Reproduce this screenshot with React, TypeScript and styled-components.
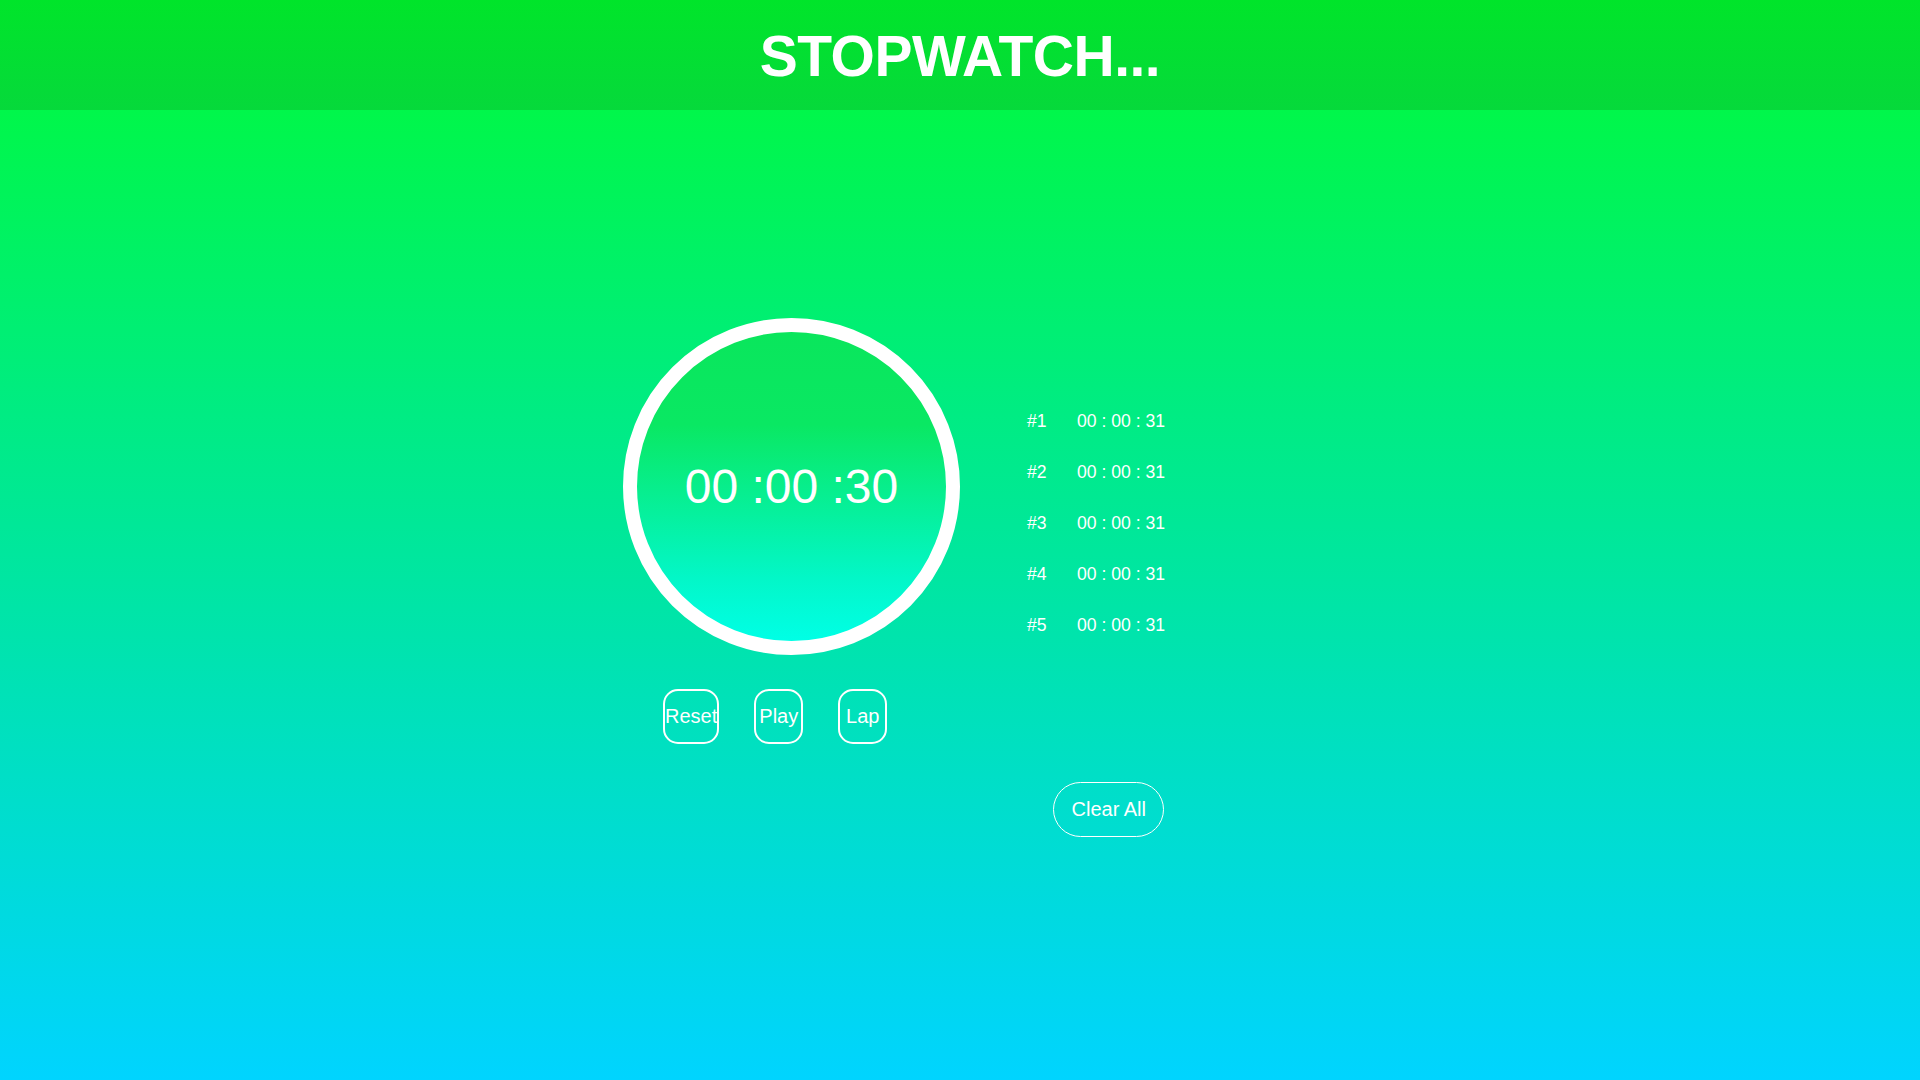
import React from "react";
import styled, { createGlobalStyle } from "styled-components";

const GlobalStyle = createGlobalStyle`
  html, body {
    margin: 0;
    padding: 0;
  }
  body {
    font-family: "Liberation Sans", Arial, sans-serif;
    min-height: 1080px;
    background: linear-gradient(180deg, #00fa44 0%, #00f74a 10%, #00d4ff 100%);
    color: #ffffff;
  }
`;

const Page = styled.div`
  min-height: 1080px;
  display: flex;
  flex-direction: column;
`;

const Header = styled.header`
  height: 110px;
  display: flex;
  align-items: center;
  justify-content: center;
  background: linear-gradient(180deg, #00e52a 0%, #06d93b 100%);
`;

const Title = styled.h1`
  margin: 0;
  font-family: "Liberation Sans", Arial, sans-serif;
  font-weight: 700;
  font-size: 57px;
  letter-spacing: -0.5px;
  color: #ffffff;
  line-height: 1;
  padding-top: 2px;
`;

const Main = styled.main`
  width: 674px;
  margin: 208px auto 0;
  display: grid;
  grid-template-columns: 337px 138px;
  column-gap: 67px;
`;

const LeftColumn = styled.div`
  display: flex;
  flex-direction: column;
`;

const Dial = styled.div`
  width: 337px;
  height: 337px;
  box-sizing: border-box;
  border-radius: 50%;
  border: 14px solid #ffffff;
  background: linear-gradient(180deg, #0ae65c 0%, #0ae863 30%, #03f7c8 80%, #00ffe6 100%);
  display: flex;
  align-items: center;
  justify-content: center;
`;

const TimeText = styled.div`
  font-size: 48px;
  font-weight: 400;
  color: #ffffff;
  line-height: 1;
`;

const Controls = styled.div`
  display: flex;
  gap: 35px;
  margin-top: 34px;
  padding-left: 40px;
`;

const RoundButton = styled.button`
  min-width: 49px;
  height: 55px;
  padding: 0;
  box-sizing: border-box;
  border: 2px solid #ffffff;
  border-radius: 15px;
  background: transparent;
  color: #ffffff;
  font-family: "Liberation Sans", Arial, sans-serif;
  font-size: 20px;
  cursor: pointer;
`;

const RightColumn = styled.div`
  display: flex;
  flex-direction: column;
  padding-top: 78px;
`;

const LapList = styled.ul`
  list-style: none;
  margin: 0;
  padding: 0;
`;

const LapRow = styled.li`
  display: flex;
  gap: 30px;
  height: 51px;
  align-items: center;
  font-size: 17.6px;
  color: #ffffff;
`;

const LapIndex = styled.span`
  width: 20px;
`;

const LapTime = styled.span`
  white-space: pre;
`;

const ClearButton = styled.button`
  align-self: flex-end;
  margin-top: 131px;
  height: 55px;
  padding: 0 17px 0 18px;
  margin-right: 1px;
  border: 1px solid #ffffff;
  border-radius: 28px;
  background: transparent;
  color: #ffffff;
  font-family: "Liberation Sans", Arial, sans-serif;
  font-size: 20px;
  cursor: pointer;
`;

const laps = [1, 2, 3, 4, 5].map((n) => ({ id: n, time: "00 : 00 : 31" }));

export default function App() {
  return (
    <>
      <GlobalStyle />
      <Page>
        <Header>
          <Title>STOPWATCH...</Title>
        </Header>
        <Main>
          <LeftColumn>
            <Dial>
              <TimeText>00 :00 :30</TimeText>
            </Dial>
            <Controls>
              <RoundButton>Reset</RoundButton>
              <RoundButton>Play</RoundButton>
              <RoundButton>Lap</RoundButton>
            </Controls>
          </LeftColumn>
          <RightColumn>
            <LapList>
              {laps.map((lap) => (
                <LapRow key={lap.id}>
                  <LapIndex>#{lap.id}</LapIndex>
                  <LapTime>{lap.time}</LapTime>
                </LapRow>
              ))}
            </LapList>
            <ClearButton>Clear All</ClearButton>
          </RightColumn>
        </Main>
      </Page>
    </>
  );
}
